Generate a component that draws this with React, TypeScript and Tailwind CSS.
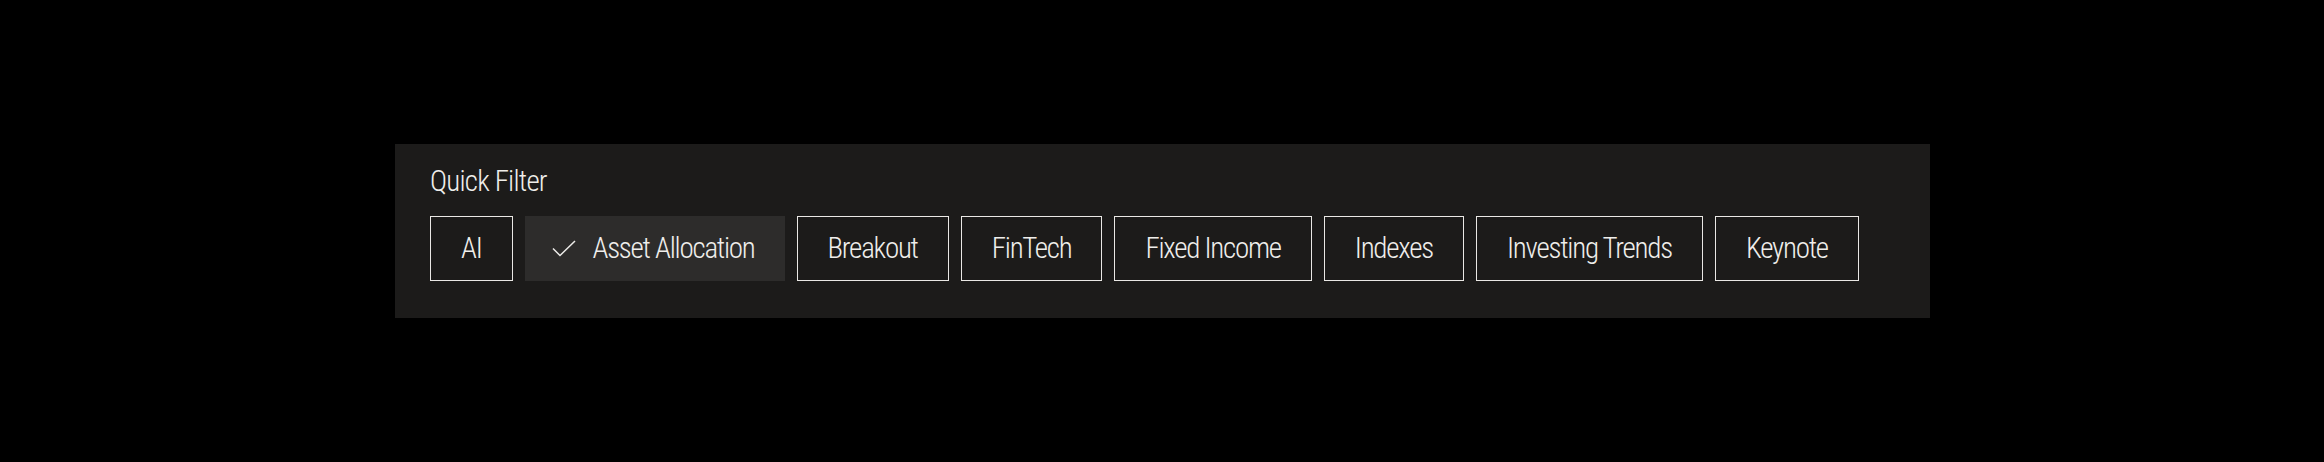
const filters = [
  "AI",
  "Asset Allocation",
  "Breakout",
  "FinTech",
  "Fixed Income",
  "Indexes",
  "Investing Trends",
  "Keynote",
]

function Check() {
  return (
    <svg width="24" height="17" viewBox="0 0 24 17" fill="none" className="shrink-0">
      <path d="M1 8.5 L8 15.5 L23 1" stroke="#ecebe8" strokeWidth="1.5" />
    </svg>
  )
}

export default function App() {
  const selected = "Asset Allocation"
  return (
    <div className="w-[2324px] h-[462px] bg-black pt-[144px] pl-[395px]">
      <div className="w-[1535px] h-[174px] bg-[#1c1b1a] px-[35px] pt-[17px] text-[#efeeeb] font-light [font-family:'Roboto_Condensed','DejaVu_Sans_Condensed',sans-serif]">
        <div className="text-[29px] leading-[40px] tracking-[-0.8px]">Quick Filter</div>
        <div className="flex gap-3 mt-[15px] tracking-[-1.25px]">
          {filters.map((f) => (
            <button
              key={f}
              className={
                f === selected
                  ? "h-[65px] pl-[27px] pr-[30px] flex items-center gap-[17px] bg-[#2d2c2b] text-[29px] whitespace-nowrap"
                  : "h-[65px] px-[30px] flex items-center border-[1.75px] border-[#eae8e5] text-[29px] whitespace-nowrap"
              }
            >
              {f === selected && <Check />}
              {f}
            </button>
          ))}
        </div>
      </div>
    </div>
  )
}
